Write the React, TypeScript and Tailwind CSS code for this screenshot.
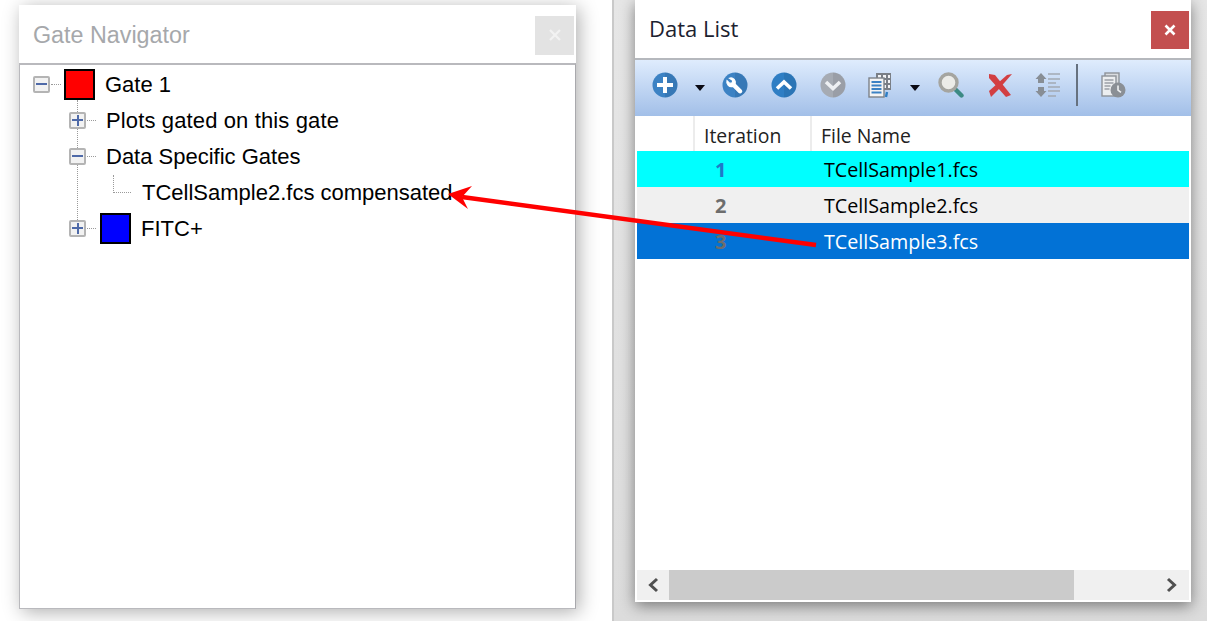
function Expander({ open }: { open: boolean }) {
  return (
    <span className="relative flex h-[17px] w-[17px] shrink-0 items-center justify-center rounded-[2px] border-2 border-[#b4b4b4] bg-[#f2f2f2]">
      <span className="absolute h-[2px] w-[11px] bg-[#4f6aa8]" />
      {!open && <span className="absolute h-[11px] w-[2px] bg-[#4f6aa8]" />}
    </span>
  );
}

function Dots({ w }: { w: string }) {
  return <span className={`shrink-0 border-t border-dotted border-[#9a9a9a] ${w}`} />;
}

function Swatch({ color }: { color: string }) {
  return <span className={`h-[31px] w-[31px] shrink-0 border-2 border-black ${color}`} />;
}

function GateNavigator() {
  return (
    <section className="flex h-[604px] w-[557px] flex-col bg-white shadow-[3px_3px_18px_rgba(0,0,0,0.32)]">
      <header className="flex h-[58px] shrink-0 items-center justify-between pl-[14px] pr-[2px] pt-[2px]">
        <h2 className="text-[23.3px] text-[#a6a8ab]">Gate Navigator</h2>
        <span className="flex h-[39px] w-[39px] items-center justify-center bg-[#e3e3e3] text-white">
          <svg width="14" height="14" viewBox="0 0 14 14" fill="none" stroke="#f2f2f2" strokeWidth="2.2"><path d="M2 2l10 10M12 2L2 12" /></svg>
        </span>
      </header>
      <div className="relative flex-1 border-x border-b border-t-2 border-[#b9b9bd] border-r-[#a9a9ad] pt-[1px] text-[22px] text-black [font-family:'Liberation_Sans',sans-serif]">
        <span className="absolute left-[57px] top-[35px] h-[122px] border-l border-dotted border-[#9a9a9a]" />
        <div className="flex h-9 items-center pl-[13px]">
          <Expander open />
          <Dots w="w-[10px] ml-[1px] mr-[3px]" />
          <Swatch color="bg-[#ff0000]" />
          <span className="ml-[10px]">Gate 1</span>
        </div>
        <div className="relative flex h-9 items-center pl-[49px]">
          <Expander open={false} />
          <Dots w="w-[9px] ml-[1px] mr-[10px]" />
          <span className="tracking-[0.13px]">Plots gated on this gate</span>
        </div>
        <div className="relative flex h-9 items-center pl-[49px]">
          <Expander open />
          <Dots w="w-[9px] ml-[1px] mr-[10px]" />
          <span>Data Specific Gates</span>
        </div>
        <div className="relative flex h-9 items-center pl-[93px]">
          <span className="mb-[16px] mr-[11px] h-[18px] w-[18px] shrink-0 border-b border-l border-dotted border-[#9a9a9a]" />
          <span>TCellSample2.fcs compensated</span>
        </div>
        <div className="relative flex h-9 items-center pl-[49px]">
          <Expander open={false} />
          <Dots w="w-[9px] ml-[1px] mr-[4px]" />
          <Swatch color="bg-[#0000ff]" />
          <span className="ml-[10px]">FITC+</span>
        </div>
      </div>
    </section>
  );
}

function Round({ fill, children }: { fill: string; children: React.ReactNode }) {
  return (
    <svg width="26" height="26" viewBox="0 0 26 26" className="shrink-0">
      <circle cx="13" cy="13" r="12.5" fill={fill} />
      <path d="M13 .5a12.5 12.5 0 0 1 0 25z" fill="#000" opacity="0.07" />
      {children}
    </svg>
  );
}

function Caret({ className }: { className: string }) {
  return (
    <svg width="10" height="6" viewBox="0 0 10 6" className={`mt-[6px] shrink-0 ${className}`}>
      <path d="M0 0h10L5 6z" fill="#0a0a14" />
    </svg>
  );
}

function Toolbar() {
  return (
    <div className="flex h-[58px] shrink-0 items-center border-t-2 border-[#b5b8bd] bg-gradient-to-b from-[#dfecfd] to-[#a2bfe8] pb-[6px] pl-[17px]">
      <Round fill="#3c82c4">
        <path d="M13 5v16M5 13h16" stroke="#fff" strokeWidth="4" />
      </Round>
      <Caret className="ml-[17px]" />
      <span className="ml-[17px] flex">
        <Round fill="#3c82c4">
          <g transform="translate(26,0) scale(-1,1)">
            <path d="M18.5 6.2a4.6 4.6 0 0 0-5.7 5.9l-6 6a1.6 1.6 0 0 0 2.3 2.3l6-6a4.6 4.6 0 0 0 5.9-5.7l-2.8 2.7-2.4-.6-.6-2.4z" fill="#fff" stroke="#fff" strokeWidth="1.2" />
          </g>
        </Round>
      </span>
      <span className="ml-[23px] flex">
        <Round fill="#2f7ec4">
          <path d="M6 16.5l7-6.5 7 6.5" fill="none" stroke="#fff" strokeWidth="3.6" />
        </Round>
      </span>
      <span className="ml-[23px] flex">
        <Round fill="#a6abb3">
          <path d="M6 10l7 6.5 7-6.5" fill="none" stroke="#eef0f3" strokeWidth="3.6" />
        </Round>
      </span>
      <svg width="24" height="26" viewBox="0 0 24 26" className="ml-[22px] shrink-0">
        <rect x="8" y="1" width="15" height="17" fill="#7a7f86" />
        <path d="M10 3h3v3h-3zM15 3h3v3h-3zM20 3h2v3h-2zM15 8h3v3h-3zM20 8h2v3h-2zM15 13h3v3h-3zM20 13h2v3h-2z" fill="#f2f3f5" />
        <rect x="1" y="6" width="15" height="19" fill="#f4f4f4" stroke="#7d8288" strokeWidth="1.4" />
        <path d="M3.5 10h10M3.5 13.5h10M3.5 17h10M3.5 20.5h10" stroke="#3c82c4" strokeWidth="1.8" />
        <path d="M18 25l1-5" stroke="#2f7ec4" strokeWidth="2.4" />
      </svg>
      <Caret className="ml-[18px]" />
      <svg width="26" height="26" viewBox="0 0 26 26" className="ml-[18px] shrink-0">
        <path d="M17 17l6.5 6.5" stroke="#3c8a84" strokeWidth="4.4" strokeLinecap="round" />
        <circle cx="10.5" cy="10.5" r="8.5" fill="#ecece8" stroke="#a5a5a0" strokeWidth="3.4" />
      </svg>
      <svg width="26" height="26" viewBox="0 0 26 26" className="ml-[23px] shrink-0">
        <path d="M2 2L8 3L24 23L19 25L2 6Z" fill="#d23f42" />
        <path d="M25 2L20 3L2 19L4 25L11 18Z" fill="#d23f42" />
      </svg>
      <svg width="26" height="26" viewBox="0 0 26 26" className="ml-[22px] shrink-0">
        <path d="M6 1l5.5 6H9v4H3V7H.5z" fill="#888e95" />
        <path d="M3 15h6v4h2.5L6 25 .5 19H3z" fill="#888e95" />
        <path d="M13 2h12M13 7h12M13 11h8M13 15h12M13 19h12M13 24h8" stroke="#a3a9b2" strokeWidth="1.5" />
      </svg>
      <span className="ml-[15px] h-[42px] w-[2px] shrink-0 bg-[#66717f]" />
      <svg width="25" height="26" viewBox="0 0 25 26" className="ml-[23px] shrink-0">
        <rect x="4" y="1" width="14" height="20" fill="#d9dce0" stroke="#8e9399" strokeWidth="1.4" />
        <rect x="1" y="4" width="14" height="20" fill="#eceef0" stroke="#8e9399" strokeWidth="1.4" />
        <path d="M3.5 8h9M3.5 11h9M3.5 14h6M3.5 17h5" stroke="#9aa0a6" strokeWidth="1.3" />
        <circle cx="17" cy="18" r="7.5" fill="#8a8f95" />
        <path d="M17 13.5V18l3 2.4" fill="none" stroke="#eef0f2" strokeWidth="1.6" />
      </svg>
    </div>
  );
}

function Row({ n, name, row, num, text }: { n: number; name: string; row: string; num: string; text: string }) {
  return (
    <div className={`flex h-9 items-center pt-[1px] ${row}`}>
      <span className={`ml-[78px] w-[109px] text-[20px] font-bold ${num}`}>{n}</span>
      <span className={`text-[19.7px] ${text}`}>{name}</span>
    </div>
  );
}

function DataList() {
  return (
    <section className="flex h-[602px] w-[556px] flex-col bg-white shadow-[0_4px_14px_rgba(0,0,0,0.45)] [font-family:'Open_Sans',sans-serif]">
      <header className="flex h-[58px] shrink-0 items-center justify-between pb-[2px] pl-[14px] pr-[2px]">
        <h2 className="text-[22px] text-[#1c2230]">Data List</h2>
        <span className="mt-[4px] flex h-[38px] w-[38px] items-center justify-center bg-[#c34f4f]">
          <svg width="12" height="12" viewBox="0 0 12 12" fill="none" stroke="#fff" strokeWidth="2.6"><path d="M1.5 1.5l9 9M10.5 1.5l-9 9" /></svg>
        </span>
      </header>
      <Toolbar />
      <div className="flex min-h-0 flex-1 flex-col px-[2px] pb-[2px]">
        <div className="flex h-[35px] shrink-0 items-center text-[19.4px] text-[#222]">
          <span className="h-full w-[58px] border-r-2 border-[#ececec]" />
          <span className="flex h-full w-[117px] items-center border-r-2 border-[#ececec] pl-[9px] pt-[5px]">Iteration</span>
          <span className="pl-[9px] pt-[5px]">File Name</span>
        </div>
        <Row n={1} name="TCellSample1.fcs" row="bg-[#00ffff]" num="text-[#1f78c8]" text="text-black" />
        <Row n={2} name="TCellSample2.fcs" row="bg-[#f0f0f0]" num="text-[#6d6d6d]" text="text-black" />
        <Row n={3} name="TCellSample3.fcs" row="bg-[#0272d6]" num="text-[#6d6d6d]" text="text-white" />
        <div className="flex-1" />
        <div className="flex h-[30px] shrink-0 items-center bg-[#f0f0f0]">
          <span className="flex w-[32px] justify-center">
            <svg width="12" height="16" viewBox="0 0 12 16" fill="none" stroke="#505050" strokeWidth="3"><path d="M10 2L3.5 8l6.5 6" /></svg>
          </span>
          <span className="h-full w-[405px] bg-[#cbcbcb]" />
          <span className="flex flex-1 justify-end pr-[11px]">
            <svg width="12" height="16" viewBox="0 0 12 16" fill="none" stroke="#505050" strokeWidth="3"><path d="M2 2l6.5 6L2 14" /></svg>
          </span>
        </div>
      </div>
    </section>
  );
}

export default function App() {
  return (
    <div className="relative flex h-[621px] w-[1207px] overflow-hidden bg-white [font-family:'Liberation_Sans',sans-serif]">
      <div className="w-[612px] shrink-0 pl-[19px] pt-[5px]">
        <GateNavigator />
      </div>
      <div className="flex-1 border-l-2 border-[#c9c9c9] bg-gradient-to-b from-[#e6e6e6] to-[#dcdcdc] pl-[21px]">
        <DataList />
      </div>
      <svg width="1207" height="621" viewBox="0 0 1207 621" className="pointer-events-none absolute left-0 top-0">
        <path d="M816 245L462 197" stroke="#ff0000" strokeWidth="4.5" />
        <path d="M448 194L472 186L462 197L468 209z" fill="#ff0000" />
      </svg>
    </div>
  );
}
